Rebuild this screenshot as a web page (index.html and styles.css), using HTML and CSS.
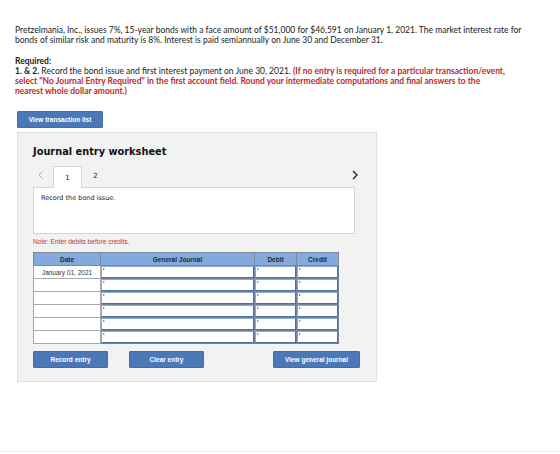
FILE: index.html
```html
<!DOCTYPE html>
<html lang="en">
  <head>
    <meta charset="UTF-8" />
    <meta name="viewport" content="width=device-width, initial-scale=1.0" />
    <title>Journal Entry Worksheet</title>
    <link rel="stylesheet" href="styles.css">
  </head>
  <body>
    <div class="page">
      <p class="intro">
        Pretzelmania, Inc., issues 7%, 15-year bonds with a face amount of $51,000 for $46,591 on January 1, 2021. The market interest rate for
        bonds of similar risk and maturity is 8%. Interest is paid semiannually on June 30 and December 31.
      </p>

      <p class="required">
        <b>Required:</b><br />
        <b>1. &amp; 2.</b> Record the bond issue and first interest payment on June 30, 2021.
        <span class="warn">(If no entry is required for a particular transaction/event, select "No Journal Entry Required" in the first account field. Round your intermediate computations and final answers to the<br />nearest whole dollar amount.)</span>
      </p>

      <button class="btn btn-list">View transaction list</button>

      <div class="worksheet">
        <h2>Journal entry worksheet</h2>

        <div class="tabs">
          <span class="nav prev">
            <svg width="6" height="10" viewBox="0 0 6 10"><path d="M5 1 L1 5 L5 9" fill="none" stroke="#b5b5b5" stroke-width="1" /></svg>
          </span>
          <span class="tab active">1</span>
          <span class="tab">2</span>
          <span class="nav next">
            <svg width="6" height="10" viewBox="0 0 6 10"><path d="M1 1 L5 5 L1 9" fill="none" stroke="#222" stroke-width="1.4" /></svg>
          </span>
        </div>

        <div class="entry-box">Record the bond issue.</div>

        <p class="note">Note: Enter debits before credits.</p>

        <table class="journal">
          <thead>
            <tr>
              <th class="col-date">Date</th>
              <th class="col-account">General Journal</th>
              <th class="col-amt">Debit</th>
              <th class="col-amt">Credit</th>
            </tr>
          </thead>
          <tbody id="journal-rows"></tbody>
        </table>

        <div class="actions">
          <button class="btn">Record entry</button>
          <button class="btn">Clear entry</button>
          <button class="btn btn-wide">View general journal</button>
        </div>
      </div>
    </div>

    <script>
      const rows = document.getElementById("journal-rows");
      for (let i = 0; i < 6; i++) {
        const tr = document.createElement("tr");
        tr.innerHTML = `
          <td class="date">${i === 0 ? "January 01, 2021" : ""}</td>
          <td class="field"><div></div></td>
          <td class="field"><div></div></td>
          <td class="field"><div></div></td>
        `;
        rows.appendChild(tr);
      }
    </script>
  </body>
</html>
```

FILE: styles.css
```css
body {
  margin: 0;
  padding: 0;
  background-color: #fff;
  font-family: Lato, "Open Sans", Arial, sans-serif;
  color: #222;
}

.page {
  padding: 25px 15px 0 15px;
  height: 426px;
  border-bottom: 1px solid #eeeeee;
}

.intro,
.required {
  margin: 0;
  width: 512px;
  font-size: 8.5px;
  line-height: 10px;
}

.required {
  margin-top: 11px;
}

.warn {
  color: #c1272d;
  font-weight: bold;
}

.btn {
  height: 17px;
  padding: 0 10px;
  border: 1px solid #3f6da8;
  border-radius: 1px;
  background-color: #4a78b8;
  color: #fff;
  font-family: "Liberation Sans", Arial, sans-serif;
  font-size: 6.5px;
  font-weight: bold;
  cursor: pointer;
}

.btn-list {
  display: block;
  margin: 15px 0 4px 2px;
  width: 86px;
}

.worksheet {
  margin-left: 2px;
  width: 343px;
  padding: 10px 0 13px 15px;
  background-color: #f2f2f2;
  border: 1px solid #e0e0e0;
}

.worksheet h2 {
  margin: 0 0 5px 0;
  height: 17px;
  line-height: 17px;
  font-family: "DejaVu Sans", Verdana, sans-serif;
  font-size: 9.8px;
  font-weight: bold;
  color: #111;
}

.tabs {
  display: flex;
  align-items: stretch;
  height: 22px;
  width: 328px;
  font-family: "DejaVu Sans", Verdana, sans-serif;
  font-size: 7px;
}

.nav {
  display: flex;
  align-items: flex-start;
  justify-content: center;
  width: 12px;
  padding-top: 5px;
}

.prev {
  margin-left: 2px;
}

.next {
  margin-left: auto;
}

.tab {
  display: flex;
  align-items: center;
  justify-content: center;
  width: 27px;
  color: #222;
}

.tab.active {
  margin-left: 6px;
  background-color: #fff;
  border: 1px solid #d4d4d4;
  border-bottom: none;
  position: relative;
  top: 1px;
}

.entry-box {
  width: 313px;
  height: 40px;
  padding: 5px 0 0 7px;
  background-color: #fff;
  border: 1px solid #d4d4d4;
  font-family: "DejaVu Sans", Verdana, sans-serif;
  font-size: 6.5px;
  line-height: 10px;
  color: #222;
}

.note {
  margin: 4px 0 7px 0;
  font-family: "Liberation Sans", Arial, sans-serif;
  font-size: 6.6px;
  color: #c0392b;
}

.journal {
  width: 302px;
  border-collapse: collapse;
  font-family: "Liberation Sans", Arial, sans-serif;
  font-size: 6.5px;
  table-layout: fixed;
}

.journal th {
  height: 12px;
  background-color: #84a9dc;
  border: 1px solid #7c8aa0;
  font-weight: bold;
  color: #1d2a3a;
  padding: 0;
}

.col-date {
  width: 66px;
}

.col-account {
  width: 153px;
}

.col-amt {
  width: 41px;
}

.journal td {
  height: 11px;
  padding: 0;
  background-color: #fff;
}

.journal td.date {
  border: 1px solid #a9a9a9;
  text-align: center;
  color: #333;
}

.journal td.field {
  border: 1px solid #6f84a4;
  position: relative;
}

.journal td.field div {
  height: 10px;
  border: 1px solid #4f6f9f;
  border-top-color: #8fa7c8;
  border-left-color: #8fa7c8;
}

/* dropdown marker in the corner of every input cell */
.journal td.field::before {
  content: "";
  position: absolute;
  top: 2px;
  left: 2px;
  border-top: 1.5px solid transparent;
  border-bottom: 1.5px solid transparent;
  border-left: 2.5px solid #3a78d0;
}

.actions {
  display: flex;
  margin-top: 7px;
  width: 327px;
}

.actions .btn {
  width: 75px;
  margin-right: 21px;
}

.actions .btn-wide {
  width: 87px;
  margin-left: auto;
  margin-right: 0;
}
```
